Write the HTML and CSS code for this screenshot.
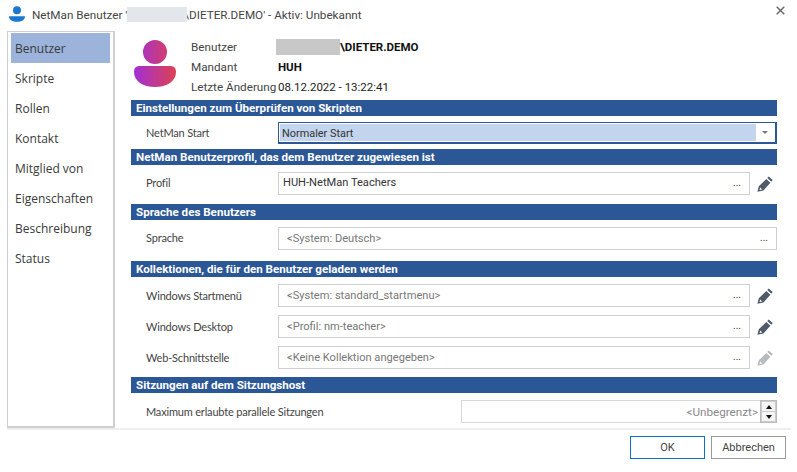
FILE: index.html
```html
<!DOCTYPE html>
<html lang="de">
<head>
<meta charset="utf-8">
<title>NetMan Benutzer</title>
<link rel="stylesheet" href="styles.css">
</head>
<body>
<svg class="defs" width="0" height="0">
  <defs>
    <linearGradient id="grad" gradientUnits="userSpaceOnUse" x1="0" y1="0" x2="42" y2="0">
      <stop offset="0" stop-color="#a22fd6"/>
      <stop offset="1" stop-color="#dc4252"/>
    </linearGradient>
    <symbol id="pencil" viewBox="0 0 16 16">
      <path d="M10.300 1.900 11.700.4 15.700 4 14.300 5.700Z"/>
      <path fill-rule="evenodd" d="M9.300 3 13.400 6.700 6.400 14.500 .4 15.700 1.800 10.200ZM3.200 11.500 2.500 14.100 5.200 13.500Z"/>
    </symbol>
  </defs>
</svg>
<div class="window">
  <header class="titlebar">
    <svg class="appicon" viewBox="0 0 16 16" width="16" height="16">
      <circle cx="8" cy="4.200" r="4" fill="#1a78d2"/>
      <path d="M0 10.200h16c0 3.600-3.400 5.600-8 5.600S0 13.800 0 10.200Z" fill="#1a78d2"/>
    </svg>
    <span class="title">NetMan Benutzer '<span class="redact-light"></span>\DIETER.DEMO' - Aktiv: Unbekannt</span>
    <svg class="close" viewBox="0 0 9 9" width="9" height="9"><path d="M.7.7l7.600 7.600M8.300.7L.7 8.300" stroke="#666" stroke-width="1.400" fill="none"/></svg>
  </header>
  <main class="middle">
    <nav class="side">
      <div class="nav sel">Benutzer</div>
      <div class="nav">Skripte</div>
      <div class="nav">Rollen</div>
      <div class="nav">Kontakt</div>
      <div class="nav">Mitglied von</div>
      <div class="nav">Eigenschaften</div>
      <div class="nav">Beschreibung</div>
      <div class="nav">Status</div>
    </nav>
    <div class="content">
      <div class="head">
        <svg class="avatar" viewBox="0 0 42 47" width="42" height="47">
          <circle cx="21" cy="12" r="12" fill="url(#grad)"/>
          <path d="M0 32c0-4 2-6 6-6h30c4 0 6 2 6 6 0 9-9 15-21 15S0 41 0 32Z" fill="url(#grad)"/>
        </svg>
        <div class="meta">
          <span class="mk">Benutzer</span><span class="mv b"><span class="redact-dark"></span>\DIETER.DEMO</span>
          <span class="mk">Mandant</span><span class="mv b">HUH</span>
          <span class="mk">Letzte Änderung</span><span class="mv">08.12.2022 - 13:22:41</span>
        </div>
      </div>

      <h2 class="bar">Einstellungen zum Überprüfen von Skripten</h2>
      <div class="row r-select">
        <label class="lbl">NetMan Start</label>
        <div class="select"><span class="sel-text">Normaler Start</span><span class="caret"></span></div>
      </div>

      <h2 class="bar">NetMan Benutzerprofil, das dem Benutzer zugewiesen ist</h2>
      <div class="row r-one">
        <label class="lbl">Profil</label>
        <div class="field dark"><span>HUH-NetMan Teachers</span><i>...</i></div>
        <svg class="pen"><use href="#pencil"/></svg>
      </div>

      <h2 class="bar">Sprache des Benutzers</h2>
      <div class="row r-two">
        <label class="lbl">Sprache</label>
        <div class="field full"><span>&lt;System: Deutsch&gt;</span><i>...</i></div>
      </div>

      <h2 class="bar">Kollektionen, die für den Benutzer geladen werden</h2>
      <div class="rows">
        <div class="row">
          <label class="lbl">Windows Startmenü</label>
          <div class="field"><span>&lt;System: standard_startmenu&gt;</span><i>...</i></div>
          <svg class="pen"><use href="#pencil"/></svg>
        </div>
        <div class="row">
          <label class="lbl">Windows Desktop</label>
          <div class="field"><span>&lt;Profil: nm-teacher&gt;</span><i>...</i></div>
          <svg class="pen"><use href="#pencil"/></svg>
        </div>
        <div class="row">
          <label class="lbl">Web-Schnittstelle</label>
          <div class="field"><span>&lt;Keine Kollektion angegeben&gt;</span><i>...</i></div>
          <svg class="pen off"><use href="#pencil"/></svg>
        </div>
      </div>

      <h2 class="bar">Sitzungen auf dem Sitzungshost</h2>
      <div class="row r-last">
        <label class="lbl wide">Maximum erlaubte parallele Sitzungen</label>
        <div class="spin"><span>&lt;Unbegrenzt&gt;</span>
          <div class="spinbtns"><b class="up"></b><b class="down"></b></div>
        </div>
      </div>
    </div>
  </main>
  <footer class="foot">
    <button class="btn ok">OK</button>
    <button class="btn">Abbrechen</button>
  </footer>
</div>
</body>
</html>
```

FILE: styles.css
```css
* { box-sizing: border-box; }
html, body { margin: 0; padding: 0; background: #fff; }
body { font-family: Roboto, "Open Sans", sans-serif; font-size: 12px; color: #333; width: 797px; height: 472px; overflow: hidden; }
.defs { display: block; height: 0; }
.window { display: flex; flex-direction: column; height: 472px; }

.titlebar { height: 31px; display: flex; align-items: center; padding: 0 0 0 9px; flex: none; position: relative; }
.appicon { margin-top: -3px; }
.title { margin-left: 7px; margin-top: -2px; font-size: 11.700px; color: #444; white-space: nowrap; display: flex; align-items: center; }
.redact-light { display: inline-block; width: 60px; height: 15px; background: #e3e7ec; margin-right: -3px; position: relative; }
.close { position: absolute; left: 776px; top: 6px; }

.middle { display: flex; height: 399px; flex: none; border-bottom: 2px solid #eee; margin: 0 6px 0 7px; }
.side { width: 108px; flex: none; border: 1px solid #d0d0d0; border-width: 1px 2px 2px 1px; padding: 1px 3px; }
.nav { height: 30px; line-height: 32px; padding-left: 4px; font-family: "Open Sans", sans-serif; font-size: 12px; color: #3a3a3a; }
.nav.sel { background: #9cb4dc; }

.content { width: 646px; margin-left: 16px; flex: none; }
.head { height: 69px; display: flex; padding: 9px 0 0 3px; }
.avatar { flex: none; }
.meta { display: grid; grid-template-columns: 87px auto; grid-template-rows: 20px 20px 19px; margin: -3px 0 0 15px; align-items: center; white-space: nowrap; }
.mk { font-size: 11.700px; color: #444; }
.mv { font-size: 11.500px; color: #222; display: flex; align-items: center; }
.mv.b { font-weight: 700; color: #111; }
.redact-dark { width: 64px; height: 16px; background: #c8c8c8; margin-left: -2px; display: inline-block; }

.bar { margin: 0; height: 16px; line-height: 16px; background: #2b5797; color: #fff; font-size: 11.600px; font-weight: 700; padding-left: 5px; white-space: nowrap; }

.row { display: flex; align-items: center; height: 23px; position: relative; }
.lbl { width: 147px; padding-left: 15px; flex: none; font-family: Lato, Roboto, sans-serif; font-size: 11px; letter-spacing: -.18px; color: #444; }
.lbl.wide { width: 330px; }
.r-select { height: 33px; }
.r-one { margin: 7px 0 9px; }
.r-two { margin: 7px 0 11px; }
.r-one .lbl, .r-two .lbl { margin-top: -2px; }
.rows { display: flex; flex-direction: column; gap: 8px; margin: 7px 0 8px; }
.r-last { margin-top: 7px; }

.select { width: 499px; height: 22px; border: 2px solid #2b5797; border-width: 1px 2px 2px 1px; display: flex; align-items: stretch; padding: 1px; background: #fff; }
.sel-text { flex: 1; background: #c3d4ee; font-size: 10.900px; color: #333; line-height: 20px; padding-left: 2px; }
.caret { width: 18px; position: relative; flex: none; }
.caret::after { content: ""; position: absolute; left: 6px; top: 7px; border: 3px solid transparent; border-top: 3px solid #777; border-bottom: 0; }

.field { width: 472px; height: 23px; border: 1px solid #d0d0d0; display: flex; align-items: center; justify-content: space-between; padding: 0 8px 0 8px; font-size: 11.100px; color: #777; background: #fff; }
.field.full { width: 499px; }
.field.dark { color: #333; padding-left: 4px; }
.field.dark span { margin-top: -2px; }
.field i { font-style: normal; color: #333; font-size: 10px; margin-top: -2px; }
.pen { width: 16px; height: 16px; margin-left: 7px; fill: #4f5b69; flex: none; }
.pen.off { fill: #b6bbc0; }

.spin { width: 316px; height: 23px; border: 1px solid #d8d8d8; display: flex; align-items: center; justify-content: flex-end; font-size: 11.700px; color: #888; position: relative; }
.spin span { margin-right: 2px; }
.spinbtns { width: 17px; height: 23px; background: #ccc; border: 1px solid #bbb; display: flex; flex-direction: column; gap: 1px; padding: 1px; margin: -1px -1px -1px 0; flex: none; }
.spinbtns b { flex: 1; background: #f4f4f4; position: relative; display: block; }
.up::after, .down::after { content: ""; position: absolute; left: 4px; top: 3px; border: 3px solid transparent; border-top: 0; border-bottom: 4px solid #111; }
.down::after { border-bottom: 0; border-top: 4px solid #111; }

.foot { flex: 1; display: flex; justify-content: flex-end; gap: 6px; padding: 6px 11px 0 0; }
.btn { width: 75px; height: 23px; background: #fff; border: 1px solid #999; font-family: inherit; font-size: 11px; color: #444; padding: 0; }
.btn.ok { border: 1px solid #1070c8; }
```
